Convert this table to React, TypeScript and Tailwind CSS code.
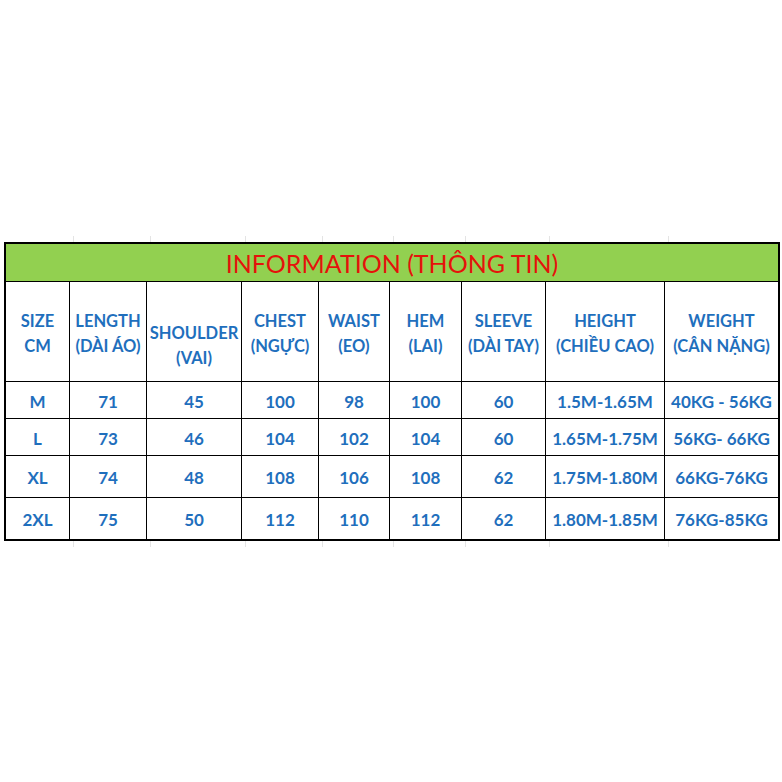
const cols = ['w-[64px]', 'w-[77px]', 'w-[95px]', 'w-[77px]', 'w-[71px]', 'w-[72px]', 'w-[84px]', 'w-[119px]', 'w-[113px]'];

const headers: string[][] = [
  ['SIZE', 'CM'],
  ['LENGTH', '(DÀI ÁO)'],
  ['SHOULDER', '(VAI)'],
  ['CHEST', '(NGỰC)'],
  ['WAIST', '(EO)'],
  ['HEM', '(LAI)'],
  ['SLEEVE', '(DÀI TAY)'],
  ['HEIGHT', '(CHIỀU CAO)'],
  ['WEIGHT', '(CÂN NẶNG)'],
];

const rows: { h: string; cells: string[] }[] = [
  { h: 'h-[37px]', cells: ['M', '71', '45', '100', '98', '100', '60', '1.5M-1.65M', '40KG - 56KG'] },
  { h: 'h-[37px]', cells: ['L', '73', '46', '104', '102', '104', '60', '1.65M-1.75M', '56KG- 66KG'] },
  { h: 'h-[42px]', cells: ['XL', '74', '48', '108', '106', '108', '62', '1.75M-1.80M', '66KG-76KG'] },
  { h: 'h-[41px]', cells: ['2XL', '75', '50', '112', '110', '112', '62', '1.80M-1.85M', '76KG-85KG'] },
];

function Ticks() {
  return (
    <div className="flex h-[6px] pl-[6px]">
      {cols.map((w, i) => (
        <div key={i} className={`${w} ${i < cols.length - 1 ? 'border-r border-[#e4e4e4]' : ''}`} />
      ))}
    </div>
  );
}

export default function App() {
  return (
    <div
      className="min-h-[782px] w-[782px] bg-white pt-[236px]"
      style={{ fontFamily: 'Lato, "Noto Sans", sans-serif' }}
    >
      <div className="ml-[4px]">
        <Ticks />
        <div className="w-[776px] border-2 border-black">
          <div className="flex h-[38px] items-center justify-center border-b border-black bg-[#92d050] pt-[3px] text-[25px] text-[#e5120b]">
            INFORMATION (THÔNG TIN)
          </div>
          <div className="flex h-[100px] border-b border-black">
            {headers.map((lines, i) => (
              <div
                key={i}
                className={`${cols[i]} flex flex-col items-center justify-center text-center text-[16.5px] font-bold leading-[25px] text-[#1f6fbd] ${i === 2 ? 'pt-[28px]' : 'pt-[4px]'} ${i < cols.length - 1 ? 'border-r border-black' : ''}`}
              >
                {lines.map((l) => (
                  <span key={l} className="whitespace-nowrap">
                    {l}
                  </span>
                ))}
              </div>
            ))}
          </div>
          {rows.map((r, ri) => (
            <div key={ri} className={`flex ${r.h} ${ri < rows.length - 1 ? 'border-b border-black' : ''}`}>
              {r.cells.map((c, i) => (
                <div
                  key={i}
                  className={`${cols[i]} flex items-center justify-center whitespace-nowrap pt-[3px] text-[17px] font-bold text-[#1f6fbd] ${i < cols.length - 1 ? 'border-r border-black' : ''}`}
                >
                  {c}
                </div>
              ))}
            </div>
          ))}
        </div>
        <Ticks />
      </div>
    </div>
  );
}
